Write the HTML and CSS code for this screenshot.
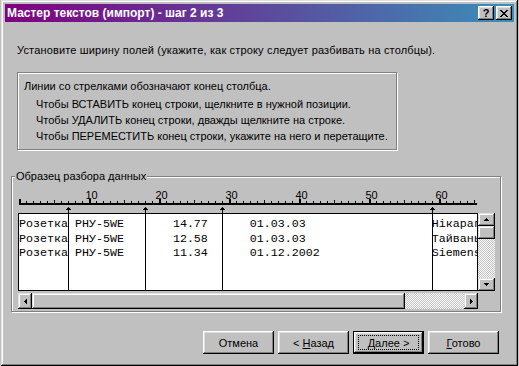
FILE: index.html
```html
<!DOCTYPE html>
<html lang="ru">
<head>
<meta charset="utf-8">
<title>Мастер текстов</title>
<link rel="stylesheet" href="styles.css">
</head>
<body>
<div class="window">
  <div class="titlebar">
    <span class="title">Мастер текстов (импорт) - шаг 2 из 3</span>
    <div class="tb-buttons">
      <div class="tb-btn help">?</div>
      <div class="tb-btn close">
        <svg width="8" height="7" viewBox="0 0 8 7"><path d="M0 0h2v1h-2zM6 0h2v1h-2zM1 1h2v1h-2zM5 1h2v1h-2zM2 2h4v1h-4zM3 3h2v1h-2zM2 4h4v1h-4zM1 5h2v1h-2zM5 5h2v1h-2zM0 6h2v1h-2zM6 6h2v1h-2z" fill="#000"/></svg>
      </div>
    </div>
  </div>
  <div class="body">
    <p class="intro">Установите ширину полей (укажите, как строку следует разбивать на столбцы).</p>
    <div class="info">
      <p class="info-head">Линии со стрелками обозначают конец столбца.</p>
      <ul class="info-list">
        <li>Чтобы ВСТАВИТЬ конец строки, щелкните в нужной позиции.</li>
        <li>Чтобы УДАЛИТЬ конец строки, дважды щелкните на строке.</li>
        <li>Чтобы ПЕРЕМЕСТИТЬ конец строки, укажите на него и перетащите.</li>
      </ul>
    </div>
    <div class="group">
      <span class="group-label">Образец разбора данных</span>
      <svg class="ruler" width="460" height="27" viewBox="0 0 460 27" shape-rendering="crispEdges">
        <defs>
          <pattern id="minor" patternUnits="userSpaceOnUse" x="1" y="0" width="7" height="27"><rect x="0" y="0" width="1" height="27" fill="#000"/></pattern>
          <pattern id="mid" patternUnits="userSpaceOnUse" x="36" y="0" width="70" height="27"><rect x="0" y="0" width="1" height="27" fill="#000"/></pattern>
          <pattern id="major" patternUnits="userSpaceOnUse" x="1" y="0" width="70" height="27"><rect x="0" y="0" width="2" height="27" fill="#000"/></pattern>
          <symbol id="arr" overflow="visible"><path d="M0 21h1v1h-1zM-1 22h3v1h-3zM-2 23h5v1h-5zM0 24h1v3h-1z" fill="#000"/></symbol>
        </defs>
        <rect x="1" y="17" width="458" height="2" fill="#000"/>
        <rect x="1" y="15" width="456" height="2" fill="url(#minor)"/>
        <rect x="36" y="14" width="421" height="3" fill="url(#mid)"/>
        <rect x="1" y="13" width="422" height="4" fill="url(#major)"/>
        <g class="ruler-num">
          <text x="73.5" y="13">10</text>
          <text x="143.5" y="13">20</text>
          <text x="213.5" y="13">30</text>
          <text x="283.5" y="13">40</text>
          <text x="353.5" y="13">50</text>
          <text x="423.5" y="13">60</text>
        </g>
        <use href="#arr" x="50" y="0"/>
        <use href="#arr" x="127" y="0"/>
        <use href="#arr" x="204" y="0"/>
        <use href="#arr" x="414" y="0"/>
      </svg>
      <div class="preview-row">
        <div class="preview">
<pre class="rows">Розетка РНУ-5WE       14.77      01.03.03                  Нікарагуа
Розетка РНУ-5WE       12.58      01.03.03                  Тайвань
Розетка РНУ-5WE       11.34      01.12.2002                Siemens</pre>
          <span class="break" style="left:49px"></span>
          <span class="break" style="left:126px"></span>
          <span class="break" style="left:203px"></span>
          <span class="break" style="left:413px"></span>
        </div>
        <div class="vscroll">
          <div class="sbtn vbtn"><svg width="5" height="3" viewBox="0 0 5 3"><path d="M2 0h1v1h-1zM1 1h3v1h-3zM0 2h5v1h-5z" fill="#000"/></svg></div>
          <div class="sbtn vthumb"></div>
          <div class="track"></div>
          <div class="sbtn vbtn"><svg width="5" height="3" viewBox="0 0 5 3"><path d="M0 0h5v1h-5zM1 1h3v1h-3zM2 2h1v1h-1z" fill="#000"/></svg></div>
        </div>
      </div>
      <div class="hscroll">
        <div class="sbtn hbtn"><svg width="3" height="5" viewBox="0 0 3 5"><path d="M0 2h1v1h-1zM1 1h1v3h-1zM2 0h1v5h-1z" fill="#000"/></svg></div>
        <div class="sbtn hthumb"></div>
        <div class="track"></div>
        <div class="sbtn hbtn"><svg width="3" height="5" viewBox="0 0 3 5"><path d="M0 0h1v5h-1zM1 1h1v3h-1zM2 2h1v1h-1z" fill="#000"/></svg></div>
      </div>
    </div>
    <div class="actions">
      <button class="btn">Отмена</button>
      <button class="btn">&lt; <u>Н</u>азад</button>
      <button class="btn default"><u>Д</u>алее &gt;</button>
      <button class="btn"><u>Г</u>отово</button>
    </div>
  </div>
</div>
</body>
</html>
```
FILE: styles.css
```css
* { box-sizing: border-box; }
html, body { margin: 0; padding: 0; }
body {
  width: 519px;
  height: 366px;
  overflow: hidden;
  background: #c0c0c0;
  font-family: "Liberation Sans", Arial, sans-serif;
  font-size: 11px;
  color: #000;
}
.window {
  margin-left: 1px;
  width: 517px;
  height: 366px;
  padding: 4px;
  background: #c0c0c0;
  box-shadow: inset -1px -1px #000, inset 1px 1px #dfdfdf, inset -2px -2px #808080, inset 2px 2px #fff;
  display: flex;
  flex-direction: column;
}
.titlebar {
  height: 18px;
  flex: none;
  background: linear-gradient(to right, #800080, #3a8fb8);
  display: flex;
  align-items: center;
  justify-content: space-between;
  padding: 0 2px;
  color: #fff;
  font-weight: bold;
  font-size: 12px;
}
.tb-buttons { display: flex; gap: 2px; }
.tb-btn {
  width: 16px;
  height: 14px;
  background: #c0c0c0;
  box-shadow: inset -1px -1px #000, inset 1px 1px #fff, inset -2px -2px #808080, inset 2px 2px #dfdfdf;
  display: flex;
  align-items: center;
  justify-content: center;
  color: #000;
  font-weight: bold;
  font-size: 11px;
  line-height: 14px;
}
.tb-btn.close svg { display: block; }
.body {
  flex: 1;
  display: flex;
  flex-direction: column;
  padding: 0 15px 0 0;
}
.intro { margin: 22px 0 0 12px; line-height: 13px; letter-spacing: 0.16px; }
.info {
  margin: 15px 0 0 12px;
  width: 380px;
  height: 78px;
  border: 1px solid #808080;
  box-shadow: inset 1px 1px #fff, 1px 1px #fff;
  padding: 5px 0 0 6px;
}
.info-head { margin: 0; line-height: 16px; }
.info-list { list-style: none; margin: 2px 0 0 12px; padding: 0; line-height: 16px; }
.group {
  position: relative;
  margin: 26px 0 0 6px;
  width: 490px;
  height: 136px;
  border: 1px solid #808080;
  box-shadow: inset 1px 1px #fff, 1px 1px #fff;
  padding: 9px 0 0 6px;
}
.group-label {
  position: absolute;
  top: -7px;
  left: 3px;
  padding: 0 1px;
  line-height: 13px;
  background: #c0c0c0;
}
.ruler { display: block; }
.ruler-num text {
  font-family: "Liberation Sans", Arial, sans-serif;
  font-size: 11px;
  text-anchor: middle;
  fill: #000;
}
.preview-row { display: flex; height: 78px; }
.preview {
  position: relative;
  width: 460px;
  height: 78px;
  border: 1px solid #000;
  background: #fff;
  overflow: hidden;
}
.rows {
  margin: 0;
  padding-top: 3px;
  font-family: "Liberation Mono", "Courier New", monospace;
  font-size: 11.667px;
  line-height: 14.5px;
  white-space: pre;
  color: #000;
}
.break {
  position: absolute;
  top: 0;
  bottom: 0;
  width: 1px;
  background: #000;
}
.sbtn {
  background: #c0c0c0;
  box-shadow: inset -1px -1px #000, inset 1px 1px #dfdfdf, inset -2px -2px #808080, inset 2px 2px #fff;
  display: flex;
  align-items: center;
  justify-content: center;
  flex: none;
}
.sbtn svg { display: block; }
.track {
  flex: 1;
  background: repeating-conic-gradient(#c0c0c0 0 25%, #fff 0 50%) 0 0 / 2px 2px;
}
.vscroll {
  width: 17px;
  height: 78px;
  display: flex;
  flex-direction: column;
}
.vbtn, .vthumb { height: 13px; }
.hscroll {
  margin-top: 2px;
  width: 460px;
  height: 16px;
  display: flex;
}
.hbtn { width: 14px; }
.hthumb { width: 373px; }
.actions {
  margin-top: 19px;
  display: flex;
  justify-content: flex-end;
  gap: 4px;
}
.btn {
  position: relative;
  width: 71px;
  height: 23px;
  margin: 0;
  padding: 0;
  border: none;
  background: #c0c0c0;
  box-shadow: inset -1px -1px #000, inset 1px 1px #fff, inset -2px -2px #808080, inset 2px 2px #dfdfdf;
  font-family: "Liberation Sans", Arial, sans-serif;
  font-size: 11px;
  color: #000;
  text-align: center;
}
.btn.default {
  border: 1px solid #000;
}
.btn.default::after {
  content: "";
  position: absolute;
  top: 3px;
  left: 4px;
  right: 4px;
  bottom: 3px;
  border: 1px dotted #000;
}
```
